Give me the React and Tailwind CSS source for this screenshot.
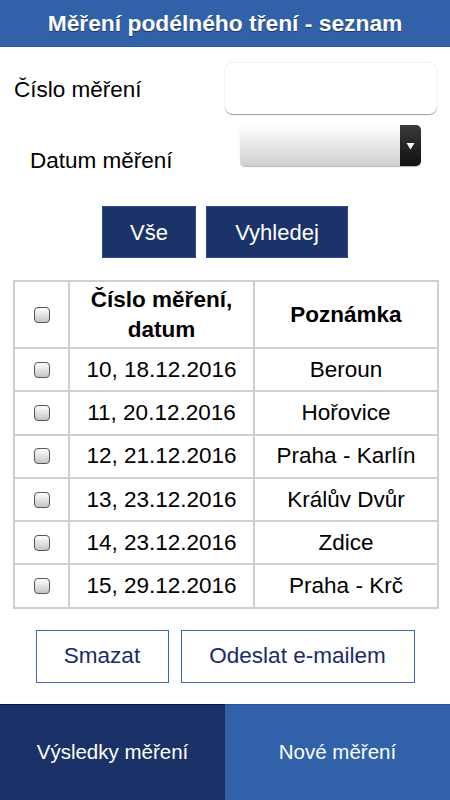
export default function App() {
  const rows = [
    ["10, 18.12.2016", "Beroun"],
    ["11, 20.12.2016", "Hořovice"],
    ["12, 21.12.2016", "Praha - Karlín"],
    ["13, 23.12.2016", "Králův Dvůr"],
    ["14, 23.12.2016", "Zdice"],
    ["15, 29.12.2016", "Praha - Krč"],
  ];
  const Box = () => (
    <div className="mx-auto w-[16px] h-[16px] rounded-[4px] border border-[#555] bg-gradient-to-b from-white to-[#c4c4c4]" />
  );
  return (
    <div className="w-[450px] h-[800px] flex flex-col bg-white font-['Liberation_Sans',Arial,sans-serif] text-black overflow-hidden">
      <div className="h-[47px] shrink-0 bg-[#3061a9] flex items-center justify-center text-white font-bold text-[22.8px] [text-shadow:0_1px_1px_rgba(0,0,0,0.45)] border-b border-[#2a5599]">
        Měření podélného tření - seznam
      </div>

      <div className="flex items-center mt-[15px]">
        <div className="pl-[14px] text-[22.5px] leading-[26px] mt-[3px]">Číslo měření</div>
        <div className="ml-auto mr-[13px] w-[212px] h-[52px] rounded-[8px] bg-white shadow-[0_1px_1px_rgba(0,0,0,0.4)] border-t border-[#f2f2f2]" />
      </div>

      <div className="flex items-start mt-[11px]">
        <div className="ml-[30px] mt-[23px] text-[22.5px] leading-[26px]">Datum měření</div>
        <div className="ml-auto mr-[29px] w-[181px] h-[41px] rounded-[5px] overflow-hidden flex shadow-[0_1px_1px_rgba(0,0,0,0.3)]">
          <div className="flex-1 bg-gradient-to-b from-white to-[#cfcfcf]" />
          <div className="w-[21px] bg-gradient-to-b from-[#3a3a3a] to-[#111] flex items-center justify-center">
            <svg width="9" height="8" viewBox="0 0 9 8">
              <path d="M0.5 1 L8.5 1 L4.5 7.5 Z" fill="white" />
            </svg>
          </div>
        </div>
      </div>

      <div className="flex justify-center gap-[10px] mt-[32px]">
        <div className="w-[94px] h-[52px] bg-[#1b3369] border border-[#2b4a8a] text-white text-[22px] flex items-center justify-center">Vše</div>
        <div className="w-[142px] h-[52px] bg-[#1b3369] border border-[#2b4a8a] text-white text-[22px] flex items-center justify-center">Vyhledej</div>
      </div>

      <table className="mt-[22px] ml-[13px] w-[424px] border-collapse text-[22.5px] table-fixed">
        <colgroup>
          <col className="w-[55px]" />
          <col className="w-[185px]" />
          <col className="w-[184px]" />
        </colgroup>
        <thead>
          <tr className="h-[67px]">
            <th className="border-2 border-[#cfcfcf]"><Box /></th>
            <th className="border-2 border-[#cfcfcf] font-bold leading-[30px]">Číslo měření,<br />datum</th>
            <th className="border-2 border-[#cfcfcf] font-bold">Poznámka</th>
          </tr>
        </thead>
        <tbody>
          {rows.map(([a, b]) => (
            <tr key={a} className="h-[43.3px]">
              <td className="border-2 border-[#cfcfcf] leading-[26px]"><Box /></td>
              <td className="border-2 border-[#cfcfcf] text-center leading-[26px]">{a}</td>
              <td className="border-2 border-[#cfcfcf] text-center leading-[26px]">{b}</td>
            </tr>
          ))}
        </tbody>
      </table>

      <div className="flex justify-center gap-[12px] mt-[21px]">
        <div className="w-[133px] h-[53px] border border-[#3a6bb8] text-[#1a2a6a] text-[22.5px] flex items-center justify-center">Smazat</div>
        <div className="w-[234px] h-[53px] border border-[#3a6bb8] text-[#1a2a6a] text-[22.5px] flex items-center justify-center">Odeslat e-mailem</div>
      </div>

      <div className="mt-auto h-[96px] shrink-0 flex text-white text-[20.5px]">
        <div className="w-[225px] bg-[#1a3268] border-t border-[#0b1746] flex items-center justify-center">Výsledky měření</div>
        <div className="flex-1 bg-[#3061a9] border-t border-[#2a55a0] flex items-center justify-center">Nové měření</div>
      </div>
    </div>
  );
}
